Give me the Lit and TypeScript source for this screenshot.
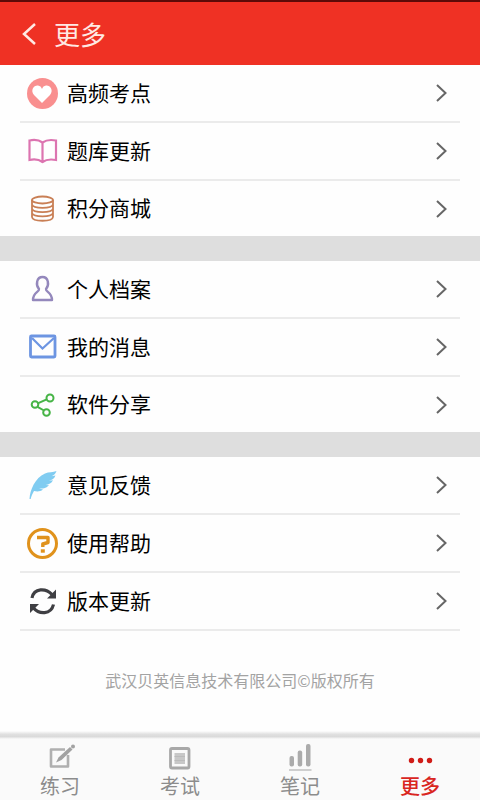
import { LitElement, html, svg, css } from "lit";
import { customElement, property } from "lit/decorators.js";

const icons: Record<string, unknown> = {
  heart: svg`<circle cx="16.5" cy="16.5" r="15.5" fill="#f98f8f"/>
    <path d="M16 26 L8 18 C4 13 8 8 12 8.5 C14 8.8 15.3 10 16 12 C16.7 10 18 8.8 20 8.5 C24 8 28 13 24 18Z" fill="#fff"/>`,
  book: svg`<path d="M16.5 7.5 C13 5 8 4.5 3.5 5.5 V25 C8 24 13 24.5 16.5 27 C20 24.5 25 24 30 25 V5.5 C25 4.5 20 5 16.5 7.5Z M16.5 7.5 V27" fill="none" stroke="#dc74b0" stroke-width="2.2"/>`,
  coins: svg`<g fill="none" stroke="#c97f55" stroke-width="1.8"><ellipse cx="16.5" cy="7" rx="10.5" ry="3.5"/>
    <path d="M6 7 V24 C6.5 29 26.5 29 27 24 V7 M6 11.5 C7.5 16 25.5 16 27 11.5 M6 15.8 C7.5 20.3 25.5 20.3 27 15.8 M6 20 C7.5 24.5 25.5 24.5 27 20"/></g>`,
  person: svg`<path d="M13 16 C9.5 12 10.5 4 16.5 4 C22.5 4 23.5 12 20 16 C19.5 19 26 19 26 27 H7 C7 19 13.5 19 13 16Z" fill="none" stroke="#9488bc" stroke-width="2.4" stroke-linejoin="round"/>`,
  mail: svg`<g fill="none" stroke="#6d95e2"><rect x="4.5" y="5" width="24.5" height="21" rx="1" stroke-width="2.8"/><path d="M6 7 L16.5 17.5 L28 7" stroke-width="2.2"/></g>`,
  share: svg`<g fill="none" stroke="#46b446" stroke-width="2"><circle cx="9" cy="15.5" r="3.3"/><circle cx="24" cy="9" r="3.5"/><circle cx="20.5" cy="23.5" r="3.3"/><path d="M12.3 14.2 L20.7 10.4 M11.5 17.8 L18 21.5"/></g>`,
  feather: svg`<path d="M3.5 30 C4 21 9 9 19 4.5 C23 2.8 27 3.5 30.5 2 C29.5 5 27.5 6.5 25.5 7.2 L29.5 6.5 C28.5 9.5 26 11 23 11.8 L27 11.3 C25.5 14.5 23 15.5 19.5 16 L23 16.2 C20 19.5 16.5 19.5 13 19.5 L17 20.5 C14 23 10.5 22.5 8 22 C6.5 24.5 5.5 27 4.7 30Z" fill="#80ccf1"/>`,
  help: svg`<circle cx="16.5" cy="16.5" r="14" fill="none" stroke="#e0921c" stroke-width="3"/>
    <path d="M11 10.5 H22 V15.5 L16.8 17 V20" fill="none" stroke="#e0921c" stroke-width="3.4" stroke-linejoin="round"/><rect x="14.8" y="22.3" width="4" height="3.4" fill="#e0921c"/>`,
  refresh: svg`<g fill="none" stroke="#3f3f43" stroke-width="3.2"><path d="M6 13 C8 2.5 20 3 26 9.5"/><path d="M27.5 19.5 C25 30 13 29.5 7.5 23"/></g>
    <path d="M30 4.5 V13.5 H21Z M4 28 V19 H13Z" fill="#3f3f43"/>`,
  edit: svg`<path d="M20 6.5 H6 V23.5 H23 V12" fill="none" stroke="#b0b0b0" stroke-width="2.6" stroke-linejoin="round"/>
    <path d="M11 19.5 L13.5 14.5 L25 4 L27.5 6.5 L16.5 17Z" fill="#a2a2a2"/><circle cx="28" cy="3.5" r="2" fill="#a2a2a2"/>`,
  exam: svg`<rect x="5.5" y="5.5" width="18.5" height="19.5" rx="1.5" fill="none" stroke="#a8a8a8" stroke-width="2.8"/><rect x="9.5" y="10" width="10.5" height="11" fill="#c8c8c8"/><path d="M9.5 13.5 H20 M9.5 17.5 H20" stroke="#bbb"/>`,
  bars: svg`<g fill="#ababab"><rect x="4.500" y="13" width="4.500" height="10.500" rx="2"/><rect x="12.700" y="7.500" width="4.500" height="16" rx="2"/><rect x="21" y="1" width="4.500" height="22.500" rx="2"/></g><path d="M4 27 H26.500" stroke="#cfcfcf" stroke-width="2"/>`,
  dots: svg`<g fill="#d01c17"><circle cx="6.500" cy="17.500" r="2.700"/><circle cx="15.500" cy="17.500" r="2.700"/><circle cx="24.500" cy="17.500" r="2.700"/></g>`,
};

const groups = [
  [["heart", "高频考点"], ["book", "题库更新"], ["coins", "积分商城"]],
  [["person", "个人档案"], ["mail", "我的消息"], ["share", "软件分享"]],
  [["feather", "意见反馈"], ["help", "使用帮助"], ["refresh", "版本更新"]],
];

const tabs = [["edit", "练习"], ["exam", "考试"], ["bars", "笔记"], ["dots", "更多"]];

@customElement("menu-row")
class MenuRow extends LitElement {
  @property() icon = "";
  @property() label = "";

  static styles = css`
    :host { display: block; height: 100%; }
    .row {
      display: flex; align-items: center; width: 100%; height: 100%;
      padding: 0 12px 0 6px; border: 0; background: none; color: #000;
      font: 400 21px/30px "Noto Sans CJK SC", sans-serif; text-align: left; cursor: pointer;
    }
    .icon { width: 32px; height: 32px; margin-right: 9px; flex: none; }
    .label { flex: 1; padding-bottom: 3px; }
    .chevron { width: 14px; height: 22px; flex: none; }
  `;

  render() {
    return html`<button class="row" type="button">
      <svg class="icon" viewBox="0 0 32 32" aria-hidden="true">${icons[this.icon]}</svg>
      <span class="label">${this.label}</span>
      <svg class="chevron" viewBox="0 0 14 22" aria-hidden="true"><path d="M3 3 L11.5 11 L3 19" fill="none" stroke="#666" stroke-width="2"/></svg>
    </button>`;
  }
}

@customElement("app-root")
class AppRoot extends LitElement {
  static styles = css`
    :host {
      display: flex; flex-direction: column; min-height: 100vh; background: #fefefe;
      font-family: "Noto Sans CJK SC", sans-serif;
    }
    * { box-sizing: border-box; }
    .header {
      display: flex; align-items: center; height: 65px; flex: none; padding-left: 20px;
      border-top: 2px solid #5c0a08; background: #ef3124; color: #ffe9e4;
    }
    .back { display: flex; width: 20px; height: 28px; padding: 0; border: 0; background: none; cursor: pointer; }
    .title { margin: 0 0 0 14px; font-size: 26px; line-height: 36px; font-weight: 400; }
    .menu { flex: 1; }
    .group { list-style: none; margin: 0; padding: 0 20px; }
    .group + .group { border-top: 25px solid #dedede; }
    .item { height: 58px; border-bottom: 2px solid #ebebeb; }
    .group:not(:last-of-type) .item:last-child { height: 55px; border-bottom: 0; }
    .copyright { margin: 37px 0 0; text-align: center; font-size: 16px; line-height: 24px; color: #a3a3a3; }
    .tabs { flex: none; background: #fafafa; }
    .tabs::before { content: ""; display: block; height: 8px; background: linear-gradient(#fefefe, #e0e0e0 40%, #dadada 70%, #fafafa); }
    .tab-list { display: flex; height: 61px; }
    .tab {
      flex: 1; display: flex; flex-direction: column; align-items: center;
      color: #8c8c8c; font-size: 20px; line-height: 26px; text-decoration: none;
    }
    .tab-icon { width: 30px; height: 30px; margin-top: 4px; flex: none; }
    .active { color: #d9261f; font-weight: 500; }
  `;

  render() {
    return html`
      <header class="header">
        <button class="back" type="button" aria-label="返回">
          <svg width="20" height="28" viewBox="0 0 20 28"><path d="M15 4 L4 14 L15 24" fill="none" stroke="#ffe9e4" stroke-width="2.5"/></svg>
        </button>
        <h1 class="title">更多</h1>
      </header>
      <main class="menu">
        ${groups.map((rows) => html`<ul class="group">
          ${rows.map(([icon, label]) => html`<li class="item"><menu-row .icon=${icon} .label=${label}></menu-row></li>`)}
        </ul>`)}
        <p class="copyright">武汉贝英信息技术有限公司©版权所有</p>
      </main>
      <nav class="tabs">
        <div class="tab-list">
          ${tabs.map(([icon, label]) => html`<a class="tab ${icon === "dots" ? "active" : ""}" href="#${icon}">
            <svg class="tab-icon" viewBox="0 0 30 30" aria-hidden="true">${icons[icon]}</svg>
            <span>${label}</span>
          </a>`)}
        </div>
      </nav>`;
  }
}
